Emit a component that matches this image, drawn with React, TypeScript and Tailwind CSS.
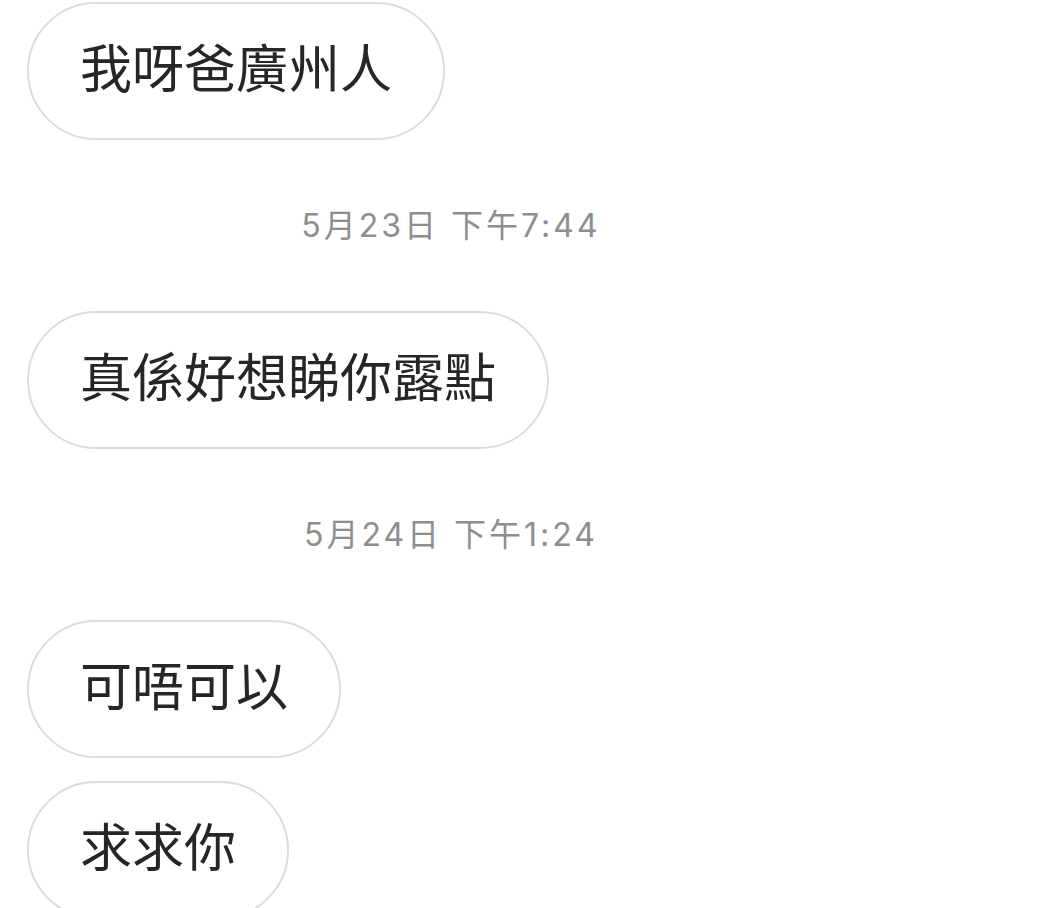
import React from "react";

const font = { fontFamily: '"Noto Sans CJK TC", "Noto Sans CJK SC", sans-serif' };
const stampFont = { fontFamily: 'Inter, "Noto Sans CJK TC", "Noto Sans CJK SC", sans-serif' };

function Bubble({ text }: { text: string }) {
  return (
    <div className="flex">
      <div className="flex h-[138px] items-center rounded-full border-2 border-[#dcdcdc] bg-white px-[51px] pb-[11px] text-[52px] leading-none text-[#262626]">
        {text}
      </div>
    </div>
  );
}

function Stamp({ text }: { text: string }) {
  return (
    <div
      className="flex h-[171px] w-[848px] items-center justify-center text-[32px] leading-none tracking-[3px] text-[#8e8e8e]"
      style={stampFont}
    >
      {text}
    </div>
  );
}

export default function App() {
  return (
    <div className="h-[908px] w-[1055px] overflow-hidden bg-white pl-[27px] pt-[2px]" style={font}>
      <Bubble text="我呀爸廣州人" />
      <Stamp text="5月23日 下午7:44" />
      <Bubble text="真係好想睇你露點" />
      <Stamp text="5月24日 下午1:24" />
      <div className="flex flex-col gap-[23px]">
        <Bubble text="可唔可以" />
        <Bubble text="求求你" />
      </div>
    </div>
  );
}
